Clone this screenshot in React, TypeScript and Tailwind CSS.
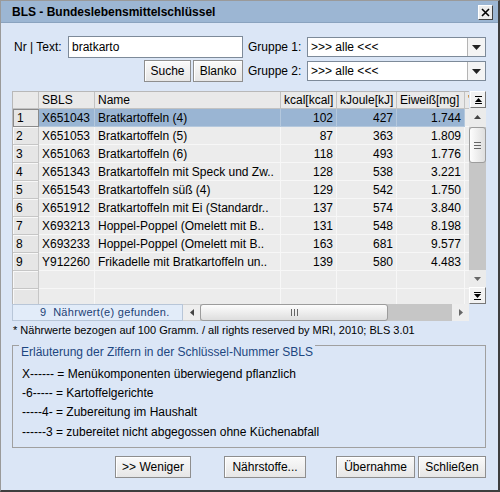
import React from 'react';

type Row = { nr: number; sbls: string; name: string; kcal: string; kj: string; eiweiss: string };

const rows: Row[] = [
  { nr: 1, sbls: 'X651043', name: 'Bratkartoffeln (4)', kcal: '102', kj: '427', eiweiss: '1.744' },
  { nr: 2, sbls: 'X651053', name: 'Bratkartoffeln (5)', kcal: '87', kj: '363', eiweiss: '1.809' },
  { nr: 3, sbls: 'X651063', name: 'Bratkartoffeln (6)', kcal: '118', kj: '493', eiweiss: '1.776' },
  { nr: 4, sbls: 'X651343', name: 'Bratkartoffeln mit Speck und Zw..', kcal: '128', kj: '538', eiweiss: '3.221' },
  { nr: 5, sbls: 'X651543', name: 'Bratkartoffeln süß (4)', kcal: '129', kj: '542', eiweiss: '1.750' },
  { nr: 6, sbls: 'X651912', name: 'Bratkartoffeln mit Ei (Standardr..', kcal: '137', kj: '574', eiweiss: '3.840' },
  { nr: 7, sbls: 'X693213', name: 'Hoppel-Poppel (Omelett mit B..', kcal: '131', kj: '548', eiweiss: '8.198' },
  { nr: 8, sbls: 'X693233', name: 'Hoppel-Poppel (Omelett mit B..', kcal: '163', kj: '681', eiweiss: '9.577' },
  { nr: 9, sbls: 'Y912260', name: 'Frikadelle mit Bratkartoffeln un..', kcal: '139', kj: '580', eiweiss: '4.483' },
];

const Btn: React.FC<{ label: string; w: string }> = ({ label, w }) => (
  <button
    className={`${w} h-[22px] flex items-center justify-center bg-gradient-to-b from-[#fafafa] to-[#e6e6e6] border border-[#8e8e8e] shadow-[inset_1px_1px_0_#ffffff] text-[12px] text-black`}
  >
    {label}
  </button>
);

const Combo: React.FC<{ h: string }> = ({ h }) => (
  <div className={`w-[179px] ${h} flex bg-white border border-[#7d8a99]`}>
    <div className="flex-1 flex items-center pl-[3px] text-[12px]">{'>>> alle <<<'}</div>
    <div className="w-[18px] border-l border-[#b4b4b4] bg-[#f4f4f4] flex items-center justify-center">
      <svg width="9" height="5" viewBox="0 0 9 5">
        <path d="M0 0h9L4.5 5z" fill="#222" />
      </svg>
    </div>
  </div>
);

const Cell: React.FC<{ children?: React.ReactNode; right?: boolean; sel?: boolean }> = ({ children, right, sel }) => (
  <div
    className={`h-[18px] flex items-center px-[3px] border-r border-b overflow-hidden whitespace-nowrap ${
      right ? 'justify-end' : ''
    } ${sel ? 'bg-[#9ab5d3] border-[#b4c8dd]' : 'bg-[#ececec] border-[#f7f7f7]'}`}
  >
    {children}
  </div>
);

const RowHead: React.FC<{ n?: number; focus?: boolean }> = ({ n, focus }) => (
  <div
    className={`h-[18px] flex items-center pl-[3px] bg-[#e6e6e6] ${
      focus ? 'border border-[#8a8a8a]' : 'border-r border-b border-[#c6c6c6] shadow-[inset_1px_1px_0_#f8f8f8]'
    }`}
  >
    {n}
  </div>
);

const Head: React.FC<{ children?: React.ReactNode }> = ({ children }) => (
  <div className="h-[17px] flex items-center px-[3px] bg-[#e9e9e9] border-r border-b border-[#c2c2c2] whitespace-nowrap overflow-hidden">
    {children}
  </div>
);

export default function App() {
  return (
    <div className="w-[500px] h-[492px] flex flex-col bg-[#dbe6f6] border-l border-t border-r-2 border-b-2 border-l-[#9a9a9a] border-t-[#9a9a9a] border-r-[#3e3e3e] border-b-[#3e3e3e] font-['Liberation_Sans',Arial,sans-serif] text-[12px] text-black">
      {/* title bar */}
      <div className="h-[22px] shrink-0 flex items-center justify-between pl-[11px] pr-[5px] bg-[#9cb6d3] border-b border-[#8aa3bf]">
        <span className="font-bold text-[12px]">BLS - Bundeslebensmittelschlüssel</span>
        <div className="w-[15px] h-[15px] mt-[2px] bg-[#ececec] border border-t-white border-l-white border-r-[#404040] border-b-[#404040] flex items-center justify-center">
          <svg width="9" height="9" viewBox="0 0 9 9">
            <path d="M1 1l7 7M8 1l-7 7" stroke="#000" strokeWidth="1.6" />
          </svg>
        </div>
      </div>

      {/* search area */}
      <div className="flex items-center mt-[13px] h-[22px]">
        <span className="pl-[13px] w-[67px]">Nr | Text:</span>
        <div className="w-[175px] h-[22px] bg-white border border-[#7d8a99] flex items-center pl-[3px] text-[12px]">
          bratkarto
        </div>
        <span className="ml-[5px] w-[59px]">Gruppe 1:</span>
        <Combo h="h-[20px]" />
      </div>
      <div className="flex items-center mt-[2px] h-[22px]">
        <div className="w-[143px]" />
        <Btn label="Suche" w="w-[47px]" />
        <div className="w-[2px]" />
        <Btn label="Blanko" w="w-[50px]" />
        <span className="ml-[5px] w-[59px]">Gruppe 2:</span>
        <Combo h="h-[20px]" />
      </div>

      {/* table */}
      <div className="mt-[9px] ml-[11px] flex">
        <div className="w-[457px]">
          <div className="h-[213px] overflow-hidden border-l border-t border-[#b8b8b8] bg-[#e8e8e8]">
            <div className="grid grid-cols-[26px_56px_186px_56px_60px_68px_5px]">
              <Head />
              <Head>SBLS</Head>
              <Head>Name</Head>
              <Head>kcal[kcal]</Head>
              <Head>kJoule[kJ]</Head>
              <Head>Eiweiß[mg]</Head>
              <Head>'</Head>
              {rows.map((r) => {
                const sel = r.nr === 1;
                return (
                  <React.Fragment key={r.nr}>
                    <RowHead n={r.nr} focus={sel} />
                    <Cell sel={sel}>{r.sbls}</Cell>
                    <Cell sel={sel}>{r.name}</Cell>
                    <Cell sel={sel} right>{r.kcal}</Cell>
                    <Cell sel={sel} right>{r.kj}</Cell>
                    <Cell sel={sel} right>{r.eiweiss}</Cell>
                    <Cell />
                  </React.Fragment>
                );
              })}
              {[10, 11].map((k) => (
                <React.Fragment key={k}>
                  <RowHead />
                  <Cell />
                  <Cell />
                  <Cell />
                  <Cell />
                  <Cell />
                  <Cell />
                </React.Fragment>
              ))}
            </div>
          </div>
          {/* status + horizontal scrollbar */}
          <div className="h-[17px] flex">
            <div className="w-[171px] flex items-center pl-[27px] bg-[#e2ecf9] border border-[#b8c6d8] text-[11px] text-[#1c3f75] tracking-[0.3px]">
              9&nbsp;&nbsp;Nährwert(e) gefunden.
            </div>
            <div className="w-[17px] flex items-center justify-center bg-[#eeeeee] border-t border-b border-[#d0d0d0]">
              <svg width="4" height="7" viewBox="0 0 4 7">
                <path d="M4 0v7L0 3.5z" fill="#444" />
              </svg>
            </div>
            <div className="flex-1 flex bg-[#c6c6c6]">
              <div className="w-[188px] h-full rounded-[3px] bg-gradient-to-b from-[#fdfdfd] to-[#dedede] border border-[#9c9c9c] flex items-center justify-center">
                <svg width="7" height="7" viewBox="0 0 7 7">
                  <path d="M0.5 0v7M3.5 0v7M6.5 0v7" stroke="#666" strokeWidth="1" />
                </svg>
              </div>
            </div>
            <div className="w-[17px] flex items-center justify-center bg-[#eeeeee]">
              <svg width="4" height="7" viewBox="0 0 4 7">
                <path d="M0 0v7L4 3.5z" fill="#666" />
              </svg>
            </div>
          </div>
        </div>

        {/* vertical scrollbar */}
        <div className="w-[17px] h-[213px] flex flex-col">
          <div className="h-[17px] ml-[1px] bg-[#f2f2f2] border border-t-white border-l-white border-r-[#777] border-b-[#777] flex items-center justify-center">
            <svg width="7" height="8" viewBox="0 0 7 8">
              <path d="M0 0.5h7M0 7.5h7" stroke="#000" strokeWidth="1" />
              <path d="M0 6L3.5 2L7 6z" fill="#000" />
            </svg>
          </div>
          <div className="flex-1 flex flex-col bg-[#c6c6c6]">
            <div className="h-[17px] bg-[#ebebeb] flex items-center justify-center">
              <svg width="7" height="4" viewBox="0 0 7 4">
                <path d="M0 4L3.5 0L7 4z" fill="#444" />
              </svg>
            </div>
            <div className="h-[2px] bg-[#ebebeb]" />
            <div className="h-[36px] rounded-[3px] bg-gradient-to-r from-[#fdfdfd] to-[#dedede] border border-[#9c9c9c] flex items-center justify-center">
              <svg width="7" height="7" viewBox="0 0 7 7">
                <path d="M0 0.5h7M0 3.5h7M0 6.5h7" stroke="#666" strokeWidth="1" />
              </svg>
            </div>
            <div className="flex-1" />
            <div className="h-[17px] bg-[#ebebeb] flex items-center justify-center">
              <svg width="7" height="4" viewBox="0 0 7 4">
                <path d="M0 0L3.5 4L7 0z" fill="#666" />
              </svg>
            </div>
          </div>
          <div className="h-[17px] bg-[#f2f2f2] border border-t-white border-l-white border-r-[#777] border-b-[#777] flex items-center justify-center">
            <svg width="7" height="8" viewBox="0 0 7 8">
              <path d="M0 0.5h7M0 7.5h7" stroke="#000" strokeWidth="1" />
              <path d="M0 2L3.5 6L7 2z" fill="#000" />
            </svg>
          </div>
        </div>
      </div>

      {/* footnote */}
      <div className="ml-[12px] mt-[1px] h-[16px] flex items-center text-[11px]">
        * Nährwerte bezogen auf 100 Gramm. / all rights reserved by MRI, 2010; BLS 3.01
      </div>

      {/* group box */}
      <div className="mt-[7px] ml-[11px] w-[474px] h-[103px] border border-[#a0a0a0] flex flex-col">
        <div className="-mt-[1px] flex">
          <span className="ml-[6px] px-[2px] h-[13px] bg-[#dbe6f6] text-[#1d4680] leading-[15px]">
            Erläuterung der Ziffern in der Schlüssel-Nummer SBLS
          </span>
        </div>
        <div className="pl-[9px] pt-[6px] flex flex-col">
          <div className="h-[19px] flex items-center">X------ = Menükomponenten überwiegend pflanzlich</div>
          <div className="h-[19px] flex items-center">-6----- = Kartoffelgerichte</div>
          <div className="h-[20px] flex items-center">-----4- = Zubereitung im Haushalt</div>
          <div className="h-[20px] flex items-center">------3 = zubereitet nicht abgegossen ohne Küchenabfall</div>
        </div>
      </div>

      {/* buttons */}
      <div className="mt-[8px] flex">
        <div className="w-[114px]" />
        <Btn label=">> Weniger" w="w-[76px]" />
        <div className="w-[33px]" />
        <Btn label="Nährstoffe..." w="w-[82px]" />
        <div className="w-[30px]" />
        <Btn label="Übernahme" w="w-[79px]" />
        <div className="w-[3px]" />
        <Btn label="Schließen" w="w-[68px]" />
      </div>
    </div>
  );
}
